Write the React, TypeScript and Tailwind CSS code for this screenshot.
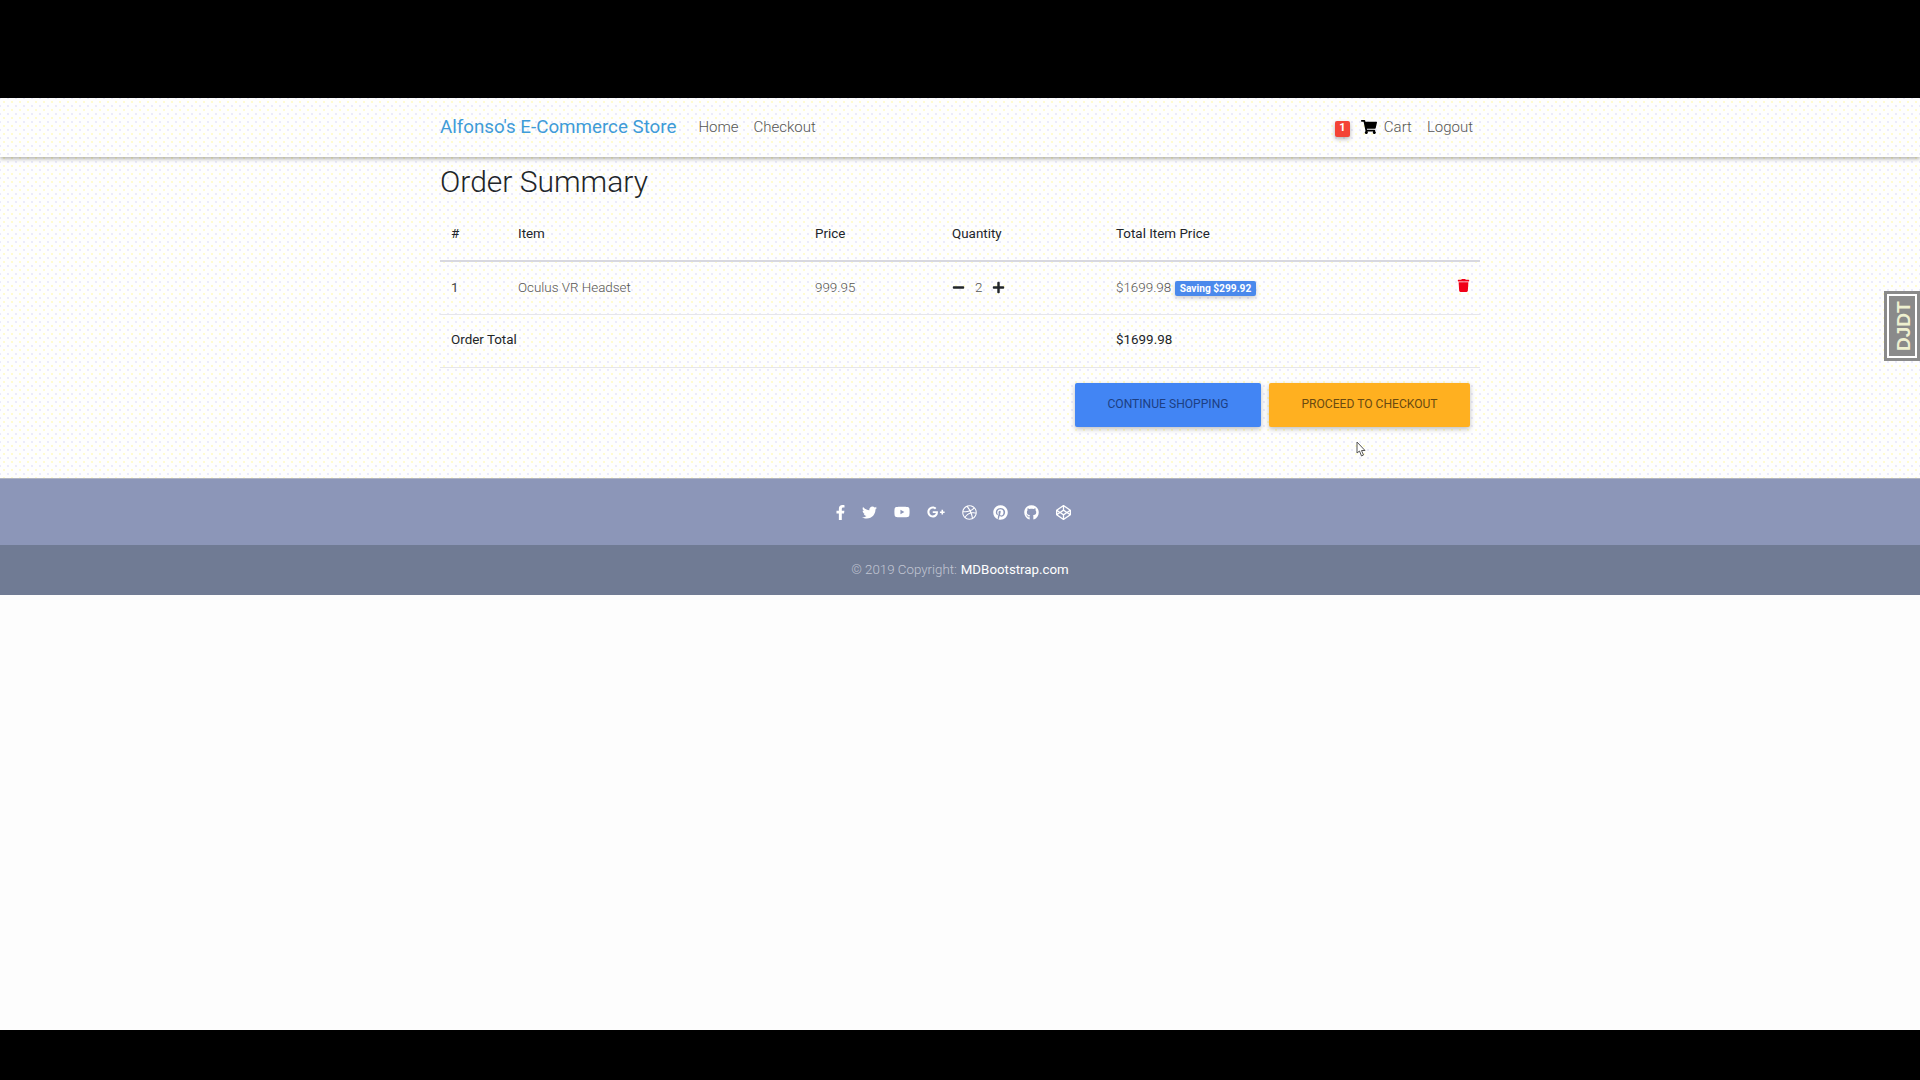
import { FaFacebookF, FaTwitter, FaYoutube, FaGooglePlusG, FaDribbble, FaPinterest, FaGithub, FaCodepen, FaShoppingCart, FaTrash, FaMinus, FaPlus } from "react-icons/fa";

export default function App() {
  return (
    <div className="relative flex h-[1080px] w-full flex-col overflow-hidden bg-[#fdfdfd] font-['Roboto',sans-serif] font-light text-[#212529]">
      <div className="h-[98px] shrink-0 bg-black" />
      <div className="flex h-[380px] shrink-0 flex-col bg-[#fefefe] bg-[radial-gradient(circle,#fffbd0_0.7px,transparent_1px),radial-gradient(circle,#ebebfa_0.7px,transparent_1px)] bg-[length:8px_8px] bg-[position:0_0,4px_4px]">
        <nav className="z-10 flex h-[59px] shrink-0 items-center justify-between pl-[440px] pr-[447px] shadow-[0_2px_4px_rgba(0,0,0,0.3)]">
          <div className="flex items-center">
            <span className="mb-[1px] text-[18.75px] font-normal text-[#3f9bd8]">Alfonso's E-Commerce Store</span>
            <span className="ml-[22px] text-[15px] text-[#555]">Home</span>
            <span className="ml-[15px] text-[15px] text-[#555]">Checkout</span>
          </div>
          <div className="flex items-center text-[15px] text-[#555]">
            <span className="mt-[2px] flex h-[16px] w-[15px] items-center justify-center rounded-[2px] bg-[#f44336] text-[11px] font-bold text-white shadow-[0_2px_4px_rgba(0,0,0,0.3)]">1</span>
            <FaShoppingCart className="mb-[1px] ml-[11px] text-[16px] text-black" />
            <span className="ml-[7px]">Cart</span>
            <span className="ml-[15px]">Logout</span>
          </div>
        </nav>
        <main className="flex-1 px-[440px]">
          <h2 className="pt-[1px] text-[30px] leading-[48px] font-light text-[#212529]">Order Summary</h2>
          <table className="mt-[3px] w-[1040px] table-fixed border-collapse text-[13.4px]">
            <colgroup>
              <col className="w-[67px]" />
              <col className="w-[297px]" />
              <col className="w-[137px]" />
              <col className="w-[164px]" />
              <col />
            </colgroup>
            <thead>
              <tr className="h-[52px] border-b-2 border-[#d8d8e0]">
                <th className="pl-[11px] text-left font-normal">#</th>
                <th className="pl-[11px] text-left font-normal">Item</th>
                <th className="pl-[11px] text-left font-normal">Price</th>
                <th className="pl-[11px] text-left font-normal">Quantity</th>
                <th className="pl-[11px] text-left font-normal">Total Item Price</th>
              </tr>
            </thead>
            <tbody>
              <tr className="h-[53px] border-b border-[#e6e6ea]">
                <td className="pl-[11px] font-normal text-[#444]">1</td>
                <td className="pl-[11px] text-[#555]">Oculus VR Headset</td>
                <td className="pl-[11px] text-[#555]">999.95</td>
                <td className="pl-[11px]">
                  <div className="flex items-center text-[#555]">
                    <FaMinus className="text-[13px] text-[#212529]" />
                    <span className="ml-[10px]">2</span>
                    <FaPlus className="ml-[10px] text-[13px] text-[#212529]" />
                  </div>
                </td>
                <td className="pl-[11px]">
                  <div className="flex items-center justify-between pr-[10px]">
                    <div className="flex items-center text-[#555]">
                      <span>$1699.98</span>
                      <span className="mt-[2px] ml-[4px] rounded-[2px] bg-[#4a89ec] px-[4.5px] py-[1px] text-[10.2px] leading-[13px] font-bold text-white shadow-[0_2px_4px_rgba(0,0,0,0.2)]">Saving $299.92</span>
                    </div>
                    <FaTrash className="mb-[5px] text-[13px] text-[#f00018]" />
                  </div>
                </td>
              </tr>
              <tr className="h-[53px] border-b border-[#e6e6ea]">
                <td colSpan={3} className="pl-[11px] font-normal">Order Total</td>
                <td />
                <td className="pl-[11px] font-normal">$1699.98</td>
              </tr>
            </tbody>
          </table>
          <div className="mt-[15px] flex justify-end gap-[8px] pr-[10px] text-[12.1px] font-normal">
            <button className="flex h-[44px] w-[186px] items-center justify-center rounded-[2px] bg-[#4285f4] text-[#1c3f83] shadow-[0_2px_5px_rgba(0,0,0,0.25)]">CONTINUE SHOPPING</button>
            <button className="flex h-[44px] w-[201px] items-center justify-center rounded-[2px] bg-[#ffb020] text-[#6a4a10] shadow-[0_2px_5px_rgba(0,0,0,0.25)]">PROCEED TO CHECKOUT</button>
          </div>
        </main>
      </div>
      <section className="flex h-[67px] shrink-0 items-center justify-center border-t border-[#b0b4c0] bg-[#8c96b8] pr-[17px] text-white">
        <div className="flex items-center gap-[17px] text-[15px]">
          <FaFacebookF />
          <FaTwitter className="-ml-[3px]" />
          <FaYoutube className="text-[16px]" />
          <FaGooglePlusG className="text-[18px]" />
          <FaDribbble />
          <FaPinterest className="-ml-[1px]" />
          <FaGithub className="-ml-[1px]" />
          <FaCodepen />
        </div>
      </section>
      <footer className="flex h-[50px] shrink-0 items-center justify-center bg-[#707b94] text-[13.3px] text-[#c2c6d3]">
        <span>© 2019 Copyright: </span>
        <span className="ml-[4px] font-normal text-white">MDBootstrap.com</span>
      </footer>
      <div className="flex-1 bg-[#fdfdfd]" />
      <div className="h-[50px] shrink-0 bg-black" />
      <div className="absolute top-[291px] right-0 flex h-[70px] w-[36px] items-center justify-center border-[3px] border-r-0 border-[#8a8a8a] bg-[#8a8a8a] outline outline-2 outline-offset-[-5px] outline-white">
        <span className="-rotate-90 font-['Liberation_Sans',sans-serif] text-[19px] font-bold whitespace-nowrap text-[#eef0d0]">DJDT</span>
      </div>
      <svg className="absolute top-[441px] left-[1356px]" width="10" height="16" viewBox="0 0 10 16">
        <path d="M1 1 L1 12 L3.5 10 L5.5 15 L7.5 14 L5.5 9.5 L9 9.5 Z" fill="#fff" stroke="#555" strokeWidth="1" />
      </svg>
    </div>
  );
}
